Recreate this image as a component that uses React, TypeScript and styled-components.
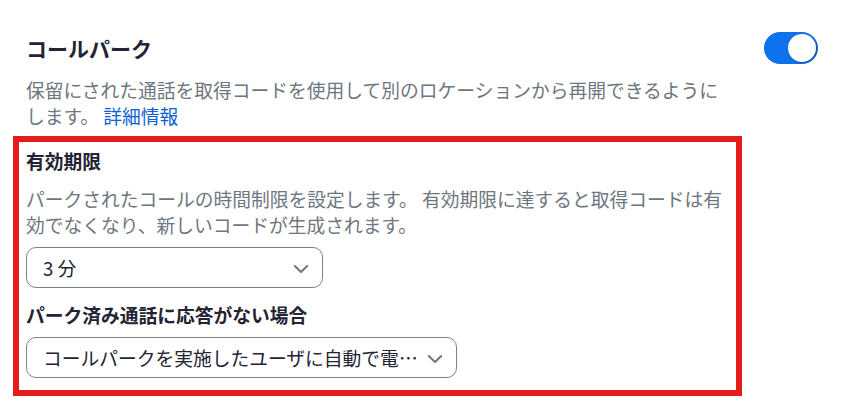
import React from "react";
import styled, { createGlobalStyle } from "styled-components";

const GlobalStyle = createGlobalStyle`
  html, body {
    margin: 0;
    padding: 0;
    background: #ffffff;
  }
  body {
    font-family: "Noto Sans CJK JP", "Noto Sans", sans-serif;
    -webkit-font-smoothing: antialiased;
  }
  * { box-sizing: border-box; }
`;

const Page = styled.div`
  width: 843px;
  padding: 32px 25px 0 13px;
`;

const Header = styled.div`
  display: flex;
  align-items: center;
  justify-content: space-between;
  height: 32px;
  padding-left: 13px;
`;

const Title = styled.h2`
  margin: 0;
  font-size: 21px;
  line-height: 32px;
  font-weight: 700;
  color: #232333;
`;

const Toggle = styled.button<{ $on: boolean }>`
  display: flex;
  align-items: center;
  justify-content: ${(p) => (p.$on ? "flex-end" : "flex-start")};
  width: 54px;
  height: 32px;
  padding: 0 2px;
  border: none;
  border-radius: 16px;
  background: ${(p) => (p.$on ? "#0E72ED" : "#BFC4CB")};
  cursor: pointer;
`;

const Knob = styled.span`
  width: 28px;
  height: 28px;
  border-radius: 50%;
  background: #ffffff;
  box-shadow: 1px 1px 2px rgba(0, 0, 0, 0.35);
`;

const Description = styled.p<{ $indent?: boolean }>`
  margin: ${(p) => (p.$indent ? "12px 0 0 0" : "13px 0 0 0")};
  padding-left: ${(p) => (p.$indent ? "0" : "13px")};
  max-width: ${(p) => (p.$indent ? "none" : "713px")};
  font-size: 18.75px;
  line-height: 25.5px;
  color: #6e7680;
`;

const Link = styled.a`
  color: #0e5fd3;
  text-decoration: none;
`;

const Highlight = styled.section`
  width: 729px;
  margin-top: 8px;
  border: 6px solid #e41c1c;
  padding: 6px 4px 12px 7px;
`;

const Label = styled.h3<{ $spaced?: boolean }>`
  margin: ${(p) => (p.$spaced ? "14px 0 0 0" : "0")};
  font-size: 18.75px;
  line-height: 26px;
  font-weight: 700;
  color: #232333;
`;

const Select = styled.div<{ $width: number; $top: number }>`
  display: flex;
  align-items: center;
  gap: 4px;
  width: ${(p) => p.$width}px;
  height: 41px;
  margin-top: ${(p) => p.$top}px;
  padding: 0 13px 0 16px;
  border: 1px solid #7d838b;
  border-radius: 10px;
  background: #ffffff;
  cursor: pointer;
`;

const SelectText = styled.span`
  flex: 1;
  min-width: 0;
  overflow: hidden;
  white-space: nowrap;
  text-overflow: ellipsis;
  font-size: 18.75px;
  line-height: 26px;
  color: #232333;
`;

const Chevron = () => (
  <svg width="16" height="16" viewBox="0 0 16 16" fill="none">
    <path
      d="M1.8 6 L8 12 L14.2 6"
      stroke="#6e7680"
      strokeWidth="2"
      strokeLinecap="round"
      strokeLinejoin="round"
    />
  </svg>
);

export default function App() {
  return (
    <>
      <GlobalStyle />
      <Page>
        <Header>
          <Title>コールパーク</Title>
          <Toggle $on aria-label="コールパーク">
            <Knob />
          </Toggle>
        </Header>
        <Description>
          保留にされた通話を取得コードを使用して別のロケーションから再開できるようにします。{" "}
          <Link href="#">詳細情報</Link>
        </Description>
        <Highlight>
          <Label>有効期限</Label>
          <Description $indent>
            パークされたコールの時間制限を設定します。
            有効期限に達すると取得コードは有効でなくなり、新しいコードが生成されます。
          </Description>
          <Select $width={297} $top={10}>
            <SelectText>3 分</SelectText>
            <Chevron />
          </Select>
          <Label $spaced>パーク済み通話に応答がない場合</Label>
          <Select $width={431} $top={9}>
            <SelectText>コールパークを実施したユーザに自動で電話をかけ直す</SelectText>
            <Chevron />
          </Select>
        </Highlight>
      </Page>
    </>
  );
}
